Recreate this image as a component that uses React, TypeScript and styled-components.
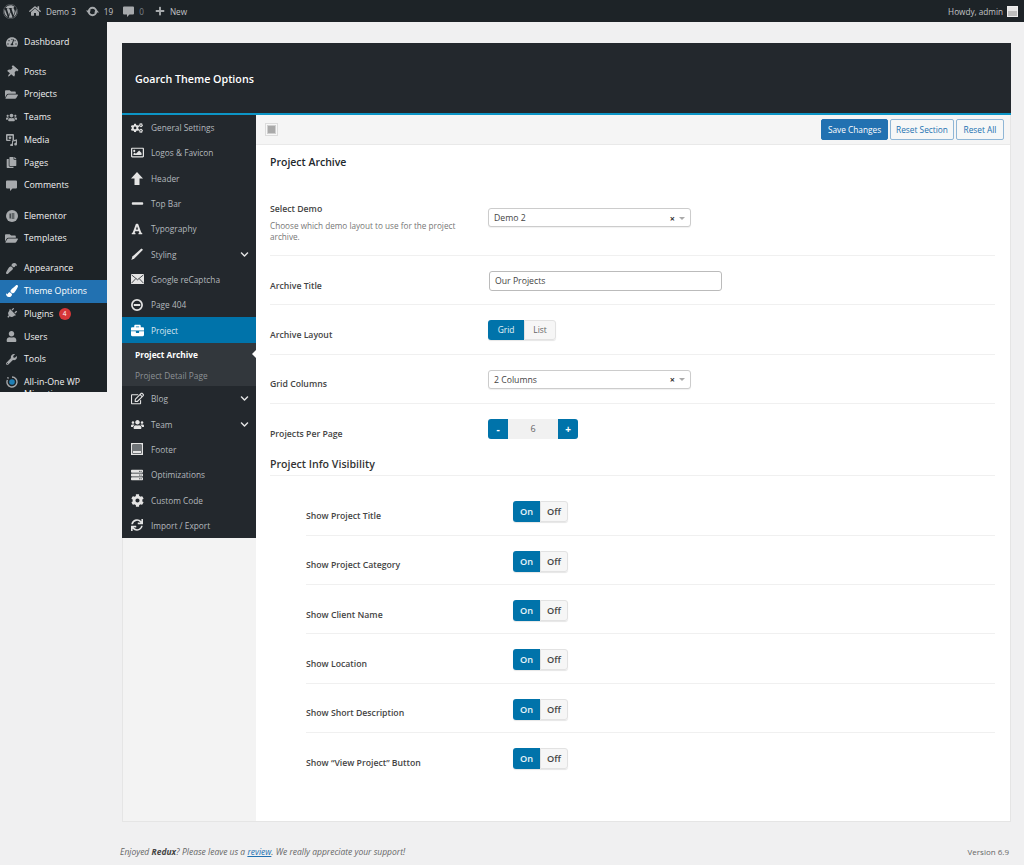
import { ReactNode } from "react";
import styled, { createGlobalStyle } from "styled-components";
import {
  FaWordpress, FaHome, FaPlus, FaTachometerAlt, FaThumbtack, FaFolderOpen, FaUsers, FaCopy,
  FaPaintBrush, FaPlug, FaUser, FaWrench, FaCogs, FaRegImage, FaMinus, FaFont, FaBriefcase, FaRegEdit,
  FaChevronDown, FaCog, FaServer, FaSync,
} from "react-icons/fa";

const GlobalStyle = createGlobalStyle`
  html, body {
    margin: 0;
    height: 865px;
    overflow: hidden;
    background: #f0f0f1;
    font-family: "Open Sans", "Liberation Sans", sans-serif;
  }
  * { box-sizing: border-box; }
`;

const AdminBar = styled.div`
  height: 22px;
  background: #1d2327;
  color: #c3c4c7;
  font-size: 8.2px;
  display: flex;
  align-items: center;
  padding: 0 6px 0 3px;
`;
const BarItem = styled.span<{ $gap?: number; $dim?: boolean }>`
  display: inline-flex;
  align-items: center;
  gap: 5px;
  margin-right: ${(p) => p.$gap ?? 0}px;
  color: ${(p) => (p.$dim ? "#7c8288" : "#c3c4c7")};
  svg { color: #a7aaad; }
`;
const BarSpacer = styled.div`
  flex: 1;
`;
const Avatar = styled.span`
  width: 11px;
  height: 11px;
  margin-left: 4px;
  background: linear-gradient(#e6e6e6 50%, #bdbdbd 50%);
  border: 1px solid #eee;
`;

const Body = styled.div`
  display: grid;
  grid-template-columns: 107px 1fr;
  align-items: start;
`;

const AdminMenu = styled.nav`
  height: 370px;
  overflow: hidden;
  background: #1d2327;
  padding-top: 8.5px;
`;
const AdminItem = styled.div<{ $active?: boolean; $sep?: boolean }>`
  height: 22.75px;
  margin-top: ${(p) => (p.$sep ? 7.4 : 0)}px;
  padding: 5px 0 0 6px;
  display: flex;
  align-items: flex-start;
  gap: 7px;
  font-size: 8.8px;
  line-height: 12px;
  color: ${(p) => (p.$active ? "#fff" : "#f0f0f1")};
  background: ${(p) => (p.$active ? "#2271b1" : "transparent")};
  svg { color: ${(p) => (p.$active ? "#fff" : "#a7aaad")}; flex: none; }
`;
const IconSlot = styled.span`
  width: 11px;
  height: 12px;
  display: inline-flex;
  align-items: center;
  justify-content: center;
  flex: none;
`;
const Turned = styled.span<{ $deg: number }>`
  display: inline-flex;
  transform: rotate(${(p) => p.$deg}deg);
`;
const Badge = styled.span`
  width: 12px;
  height: 12px;
  margin-left: -2px;
  border-radius: 50%;
  background: #d63638;
  color: #fff;
  font-size: 6.5px;
  line-height: 12px;
  text-align: center;
`;

const Main = styled.main`
  padding: 21px 13px 0 15px;
`;
const Panel = styled.section`
  height: 779px;
  display: flex;
  flex-direction: column;
  background: #f3f3f3;
  border: 1px solid #e5e5e5;
  border-top: none;
`;
const PanelHeader = styled.header`
  height: 72px;
  flex: none;
  margin: 0 -1px;
  background: #23282d;
  border-bottom: 2px solid #0c95c6;
  color: #fff;
  font-size: 10.7px;
  font-weight: 600;
  display: flex;
  align-items: center;
  padding: 1px 13px 0;
`;
const PanelBody = styled.div`
  flex: 1;
  display: grid;
  grid-template-columns: 133px 1fr;
`;

const SideMenu = styled.div`
  align-self: start;
  background: #23282d;
  margin-left: -1px;
  width: 134px;
`;
const SideItem = styled.div<{ $active?: boolean }>`
  height: 25.3px;
  padding: 0 7px 0 9px;
  display: flex;
  align-items: center;
  gap: 8px;
  font-size: 8.3px;
  color: ${(p) => (p.$active ? "#d6e6f0" : "#b4b9be")};
  background: ${(p) => (p.$active ? "#0073aa" : "transparent")};
  svg { color: ${(p) => (p.$active ? "#fff" : "#e4e4e4")}; flex: none; }
`;
const SideIcon = styled.span`
  width: 12px;
  height: 12px;
  display: inline-flex;
  align-items: center;
  justify-content: center;
  flex: none;
`;
const SideLabel = styled.span`
  flex: 1;
`;
const SubMenu = styled.div`
  background: #32373c;
  padding: 1px 0 0 13px;
  height: 43.5px;
`;
const SubItem = styled.div<{ $active?: boolean }>`
  position: relative;
  height: 21px;
  line-height: 21px;
  font-size: 8.3px;
  font-weight: ${(p) => (p.$active ? 700 : 400)};
  color: ${(p) => (p.$active ? "#fff" : "#8d9296")};
  ${(p) =>
    p.$active &&
    `&::after {
      content: "";
      position: absolute;
      right: 0;
      top: 6px;
      border: 4px solid transparent;
      border-right: 4px solid #fff;
      border-left: none;
    }`}
`;

const Content = styled.div`
  background: #fff;
  min-width: 0;
`;
const Toolbar = styled.div`
  height: 30px;
  background: #f5f5f5;
  border-bottom: 1px solid #e9e9e9;
  display: flex;
  align-items: center;
  padding: 0 6px 0 9px;
  gap: 2px;
`;
const ToolbarToggle = styled.span`
  width: 13px;
  height: 13px;
  margin-right: auto;
  padding: 2px;
  background: #f7f7f7;
  border: 1px solid #dcdcdc;
  &::before {
    content: "";
    display: block;
    width: 7px;
    height: 7px;
    background: #a9a9a9;
    box-shadow: 0 0 0 1px #cfcfcf;
  }
`;
const Button = styled.button<{ $primary?: boolean; $w: number }>`
  width: ${(p) => p.$w}px;
  height: 21px;
  padding: 0;
  border-radius: 2px;
  font-family: inherit;
  font-size: 8.3px;
  border: 1px solid ${(p) => (p.$primary ? "#2271b1" : "#8fb6d6")};
  background: ${(p) => (p.$primary ? "#2271b1" : "#f6f7f7")};
  color: ${(p) => (p.$primary ? "#fff" : "#2271b1")};
`;

const Form = styled.div`
  padding: 0 15px 0 14px;
`;
const SectionTitle = styled.h2`
  margin: 0;
  height: 49px;
  padding-top: 10px;
  font-size: 10.5px;
  line-height: 15px;
  font-weight: 600;
  color: #23282d;
`;
const Row = styled.div<{ $indent?: boolean; $last?: boolean }>`
  display: grid;
  grid-template-columns: ${(p) => (p.$indent ? "207px" : "218px")} 1fr;
  height: 49.35px;
  margin-left: ${(p) => (p.$indent ? 36 : 0)}px;
  padding-top: 15px;
  border-bottom: ${(p) => (p.$last ? "none" : "1px solid #f0f0f0")};
`;
const TallRow = styled(Row)`
  height: 62px;
  padding-top: 14px;
`;
const Label = styled.div`
  padding-top: 8.5px;
  font-size: 8.7px;
  line-height: 13px;
  font-weight: 600;
  color: #444;
`;
const TopLabel = styled(Label)`
  padding-top: 0;
  margin-top: -5px;
`;
const Description = styled.p`
  margin: 5px 0 0;
  width: 195px;
  font-size: 8.2px;
  line-height: 10.5px;
  color: #777;
`;
const SelectBox = styled.div`
  width: 203px;
  height: 19px;
  background: #fff;
  border: 1px solid #ccc;
  border-radius: 3px;
  box-shadow: 0 1px 1px rgba(0, 0, 0, 0.06);
  display: flex;
  align-items: center;
  padding: 1px 5px 0;
  font-size: 8.7px;
  color: #444;
`;
const SelectValue = styled.span`
  flex: 1;
`;
const SelectClear = styled.span`
  font-size: 9px;
  font-weight: 700;
  color: #333;
  margin-right: 4px;
`;
const SelectArrow = styled.span`
  border: 3px solid transparent;
  border-top: 3px solid #aaa;
  border-bottom: none;
`;
const TextInput = styled.div`
  width: 233px;
  height: 20px;
  margin-left: 1px;
  padding: 0 5px;
  border: 1px solid #bbb;
  border-radius: 3px;
  font-size: 8.7px;
  line-height: 18px;
  color: #444;
`;
const ButtonSet = styled.div`
  display: inline-flex;
  align-self: start;
  width: fit-content;
  border-radius: 3px;
  box-shadow: 0 1px 1px rgba(0, 0, 0, 0.1);
`;
const SetOption = styled.span<{ $w: number; $on?: boolean; $strong?: boolean; $h: number }>`
  width: ${(p) => p.$w}px;
  height: ${(p) => p.$h}px;
  line-height: ${(p) => p.$h - (p.$on ? 0 : 2)}px;
  text-align: center;
  font-size: ${(p) => (p.$strong ? 9.2 : 8.4)}px;
  font-weight: ${(p) => (p.$strong ? 600 : 400)};
  color: ${(p) => (p.$on ? "#e8f3f8" : p.$strong ? "#444" : "#666")};
  background: ${(p) => (p.$on ? "#0073aa" : "#f6f6f6")};
  border: ${(p) => (p.$on ? "none" : "1px solid #e2e2e2")};
  border-radius: ${(p) => (p.$on ? "3px 0 0 3px" : "0 3px 3px 0")};
`;
const Spinner = styled.div`
  display: inline-flex;
  width: fit-content;
  height: 20px;
  margin-top: -0.5px;
  border-radius: 3px;
  overflow: hidden;
  font-size: 9px;
`;
const SpinButton = styled.span`
  width: 20px;
  line-height: 20px;
  text-align: center;
  background: #0073aa;
  color: #fff;
  font-size: 10px;
  font-weight: 700;
`;
const SpinValue = styled.span`
  width: 50px;
  line-height: 20px;
  text-align: center;
  background: #f1f1f1;
  color: #666;
`;
const SubHeading = styled.h3`
  margin: 0;
  height: 23px;
  padding-top: 4px;
  border-bottom: 1px solid #f0f0f0;
  font-size: 10.6px;
  line-height: 15px;
  font-weight: 600;
  color: #333;
`;
const ToggleGroup = styled.div`
  padding-top: 10px;
`;

const FooterLine = styled.footer`
  margin-top: 24px;
  padding-right: 2px;
  display: flex;
  justify-content: space-between;
  font-size: 8px;
  line-height: 12px;
  color: #666;
`;
const FooterNote = styled.span`
  margin-left: -2px;
  font-size: 8.5px;
  font-style: italic;
  a { color: #2271b1; }
  b { color: #444; }
`;

// dashicons / elusive shapes the icon packages do not have
const CommentIcon = () => (
  <svg width="11" height="11" viewBox="0 0 11 11" fill="currentColor">
    <path d="M1 0.5h9a1 1 0 0 1 1 1v6a1 1 0 0 1-1 1H6.5L4 11V8.5H1a1 1 0 0 1-1-1v-6a1 1 0 0 1 1-1z" />
  </svg>
);
const UpdateIcon = () => (
  <svg width="13" height="11" viewBox="0 0 13 11" fill="none" stroke="currentColor">
    <circle cx="6.5" cy="5.5" r="3.7" strokeWidth="2" />
    <path d="M0 4.5h5L2.5 7.5zM13 6.5H8l2.5-3z" fill="currentColor" stroke="none" />
  </svg>
);
const MediaIcon = () => (
  <svg width="12" height="12" viewBox="0 0 12 12" fill="currentColor">
    <path d="M1 0h6a1 1 0 0 1 1 1v5H6.5V1.8h-5v4H4.5V7H1a1 1 0 0 1-1-1V1a1 1 0 0 1 1-1z" />
    <circle cx="4" cy="3.8" r="1.4" />
    <path d="M6 6.5l5-1.2V10a1.4 1.4 0 1 1-1.2-1.2V7L7 7.6V11a1.4 1.4 0 1 1-1-1.2z" />
  </svg>
);
const ElementorIcon = () => (
  <svg width="12" height="12" viewBox="0 0 12 12">
    <circle cx="6" cy="6" r="6" fill="currentColor" />
    <path d="M3.6 3.4h1.1v5.2H3.6zM5.6 3.4h2.8v1H5.6zM5.6 5.5h2.8v1H5.6zM5.6 7.6h2.8v1H5.6z" fill="#1d2327" />
  </svg>
);
const MigrationIcon = () => (
  <svg width="12" height="12" viewBox="0 0 12 12" fill="none">
    <path d="M6 1a5 5 0 1 1-4.6 3" stroke="#a7aaad" strokeWidth="1.4" />
    <path d="M1 1l2 .5L2 3.5z" fill="#a7aaad" />
    <circle cx="6" cy="6" r="2.8" fill="#1f7fb5" />
  </svg>
);
const BlockArrowIcon = () => (
  <svg width="12" height="13" viewBox="0 0 12 13" fill="currentColor">
    <path d="M6 0l6 6.5H8.5V13h-5V6.5H0z" />
  </svg>
);
const SlashIcon = () => (
  <svg width="12" height="12" viewBox="0 0 12 12" fill="currentColor">
    <path d="M10.4 0.4L12 1.8 3.6 10.2 0.4 12l1-3.4z" />
  </svg>
);
const MailIcon = () => (
  <svg width="13" height="10" viewBox="0 0 13 10">
    <rect width="13" height="10" fill="currentColor" />
    <path d="M0.5 0.8L6.5 5.8 12.5 0.8M0.5 9.2L4.8 4.6M12.5 9.2L8.2 4.6" stroke="#23282d" strokeWidth="0.8" fill="none" />
  </svg>
);
const NoEntryIcon = () => (
  <svg width="12" height="12" viewBox="0 0 12 12" fill="none" stroke="currentColor">
    <circle cx="6" cy="6" r="5.1" strokeWidth="1.7" />
    <path d="M2.8 6h6.4" strokeWidth="2" />
  </svg>
);
const FooterIcon = () => (
  <svg width="12" height="12" viewBox="0 0 12 12">
    <rect x="0.7" y="0.7" width="10.6" height="10.6" fill="none" stroke="currentColor" strokeWidth="1.4" />
    <rect x="2" y="2" width="8" height="5" fill="#6f7478" />
    <rect x="2" y="7.6" width="8" height="2.4" fill="currentColor" />
  </svg>
);

type IconRow = { label: string; icon: ReactNode; sep?: boolean; active?: boolean; badge?: string };

const adminRows: IconRow[] = [
  { label: "Dashboard", icon: <FaTachometerAlt size={12} /> },
  { label: "Posts", icon: <Turned $deg={40}><FaThumbtack size={12} /></Turned>, sep: true },
  { label: "Projects", icon: <FaFolderOpen size={13} /> },
  { label: "Teams", icon: <FaUsers size={11} /> },
  { label: "Media", icon: <MediaIcon /> },
  { label: "Pages", icon: <FaCopy size={11} /> },
  { label: "Comments", icon: <CommentIcon /> },
  { label: "Elementor", icon: <ElementorIcon />, sep: true },
  { label: "Templates", icon: <FaFolderOpen size={13} /> },
  { label: "Appearance", icon: <Turned $deg={180}><FaPaintBrush size={11} /></Turned>, sep: true },
  { label: "Theme Options", icon: <FaPaintBrush size={12} />, active: true },
  { label: "Plugins", icon: <Turned $deg={45}><FaPlug size={11} /></Turned>, badge: "4" },
  { label: "Users", icon: <FaUser size={11} /> },
  { label: "Tools", icon: <FaWrench size={11} /> },
  { label: "All-in-One WP Migration", icon: <MigrationIcon /> },
];

type SideRow = { label: string; icon: ReactNode; more?: boolean };

const sideTop: SideRow[] = [
  { label: "General Settings", icon: <FaCogs size={12} /> },
  { label: "Logos & Favicon", icon: <FaRegImage size={13} /> },
  { label: "Header", icon: <BlockArrowIcon /> },
  { label: "Top Bar", icon: <FaMinus size={13} /> },
  { label: "Typography", icon: <FaFont size={12} /> },
  { label: "Styling", icon: <SlashIcon />, more: true },
  { label: "Google reCaptcha", icon: <MailIcon /> },
  { label: "Page 404", icon: <NoEntryIcon /> },
];
const sideBottom: SideRow[] = [
  { label: "Blog", icon: <FaRegEdit size={13} />, more: true },
  { label: "Team", icon: <FaUsers size={13} />, more: true },
  { label: "Footer", icon: <FooterIcon /> },
  { label: "Optimizations", icon: <FaServer size={12} /> },
  { label: "Custom Code", icon: <FaCog size={13} /> },
  { label: "Import / Export", icon: <FaSync size={12} /> },
];

const toggles = [
  "Show Project Title",
  "Show Project Category",
  "Show Client Name",
  "Show Location",
  "Show Short Description",
  "Show \u201cView Project\u201d Button",
];

function SideEntry({ row }: { row: SideRow }) {
  return (
    <SideItem>
      <SideIcon>{row.icon}</SideIcon>
      <SideLabel>{row.label}</SideLabel>
      {row.more && <FaChevronDown size={9} />}
    </SideItem>
  );
}

function Select({ value }: { value: string }) {
  return (
    <SelectBox>
      <SelectValue>{value}</SelectValue>
      <SelectClear>×</SelectClear>
      <SelectArrow />
    </SelectBox>
  );
}

export default function App() {
  return (
    <>
      <GlobalStyle />
      <AdminBar>
        <BarItem $gap={11}><FaWordpress size={15} /></BarItem>
        <BarItem $gap={10}><FaHome size={12} />Demo 3</BarItem>
        <BarItem $gap={10}><UpdateIcon />19</BarItem>
        <BarItem $gap={11} $dim><CommentIcon />0</BarItem>
        <BarItem><FaPlus size={10} />New</BarItem>
        <BarSpacer />
        <BarItem>Howdy, admin</BarItem>
        <Avatar />
      </AdminBar>
      <Body>
        <AdminMenu>
          {adminRows.map((row) => (
            <AdminItem key={row.label} $sep={row.sep} $active={row.active}>
              <IconSlot>{row.icon}</IconSlot>
              {row.label}
              {row.badge && <Badge>{row.badge}</Badge>}
            </AdminItem>
          ))}
        </AdminMenu>
        <Main>
          <Panel>
            <PanelHeader>Goarch Theme Options</PanelHeader>
            <PanelBody>
              <SideMenu>
                {sideTop.map((row) => (
                  <SideEntry key={row.label} row={row} />
                ))}
                <SideItem $active>
                  <SideIcon><FaBriefcase size={13} /></SideIcon>
                  <SideLabel>Project</SideLabel>
                </SideItem>
                <SubMenu>
                  <SubItem $active>Project Archive</SubItem>
                  <SubItem>Project Detail Page</SubItem>
                </SubMenu>
                {sideBottom.map((row) => (
                  <SideEntry key={row.label} row={row} />
                ))}
              </SideMenu>
              <Content>
                <Toolbar>
                  <ToolbarToggle />
                  <Button $primary $w={67}>Save Changes</Button>
                  <Button $w={64}>Reset Section</Button>
                  <Button $w={48}>Reset All</Button>
                </Toolbar>
                <Form>
                  <SectionTitle>Project Archive</SectionTitle>
                  <TallRow>
                    <div>
                      <TopLabel>Select Demo</TopLabel>
                      <Description>Choose which demo layout to use for the project archive.</Description>
                    </div>
                    <Select value="Demo 2" />
                  </TallRow>
                  <Row>
                    <Label>Archive Title</Label>
                    <TextInput>Our Projects</TextInput>
                  </Row>
                  <Row>
                    <Label>Archive Layout</Label>
                    <ButtonSet>
                      <SetOption $w={36} $h={20} $on>Grid</SetOption>
                      <SetOption $w={32} $h={20}>List</SetOption>
                    </ButtonSet>
                  </Row>
                  <Row>
                    <Label>Grid Columns</Label>
                    <Select value="2 Columns" />
                  </Row>
                  <Row $last>
                    <Label>Projects Per Page</Label>
                    <Spinner>
                      <SpinButton>-</SpinButton>
                      <SpinValue>6</SpinValue>
                      <SpinButton>+</SpinButton>
                    </Spinner>
                  </Row>
                  <SubHeading>Project Info Visibility</SubHeading>
                  <ToggleGroup>
                    {toggles.map((label, i) => (
                      <Row key={label} $indent $last={i === toggles.length - 1}>
                        <Label>{label}</Label>
                        <ButtonSet>
                          <SetOption $w={27} $h={21} $on $strong>On</SetOption>
                          <SetOption $w={28} $h={21} $strong>Off</SetOption>
                        </ButtonSet>
                      </Row>
                    ))}
                  </ToggleGroup>
                </Form>
              </Content>
            </PanelBody>
          </Panel>
          <FooterLine>
            <FooterNote>
              Enjoyed <b>Redux</b>? Please leave us a <a href="#review">review</a>. We really appreciate your support!
            </FooterNote>
            <span>Version 6.9</span>
          </FooterLine>
        </Main>
      </Body>
    </>
  );
}
